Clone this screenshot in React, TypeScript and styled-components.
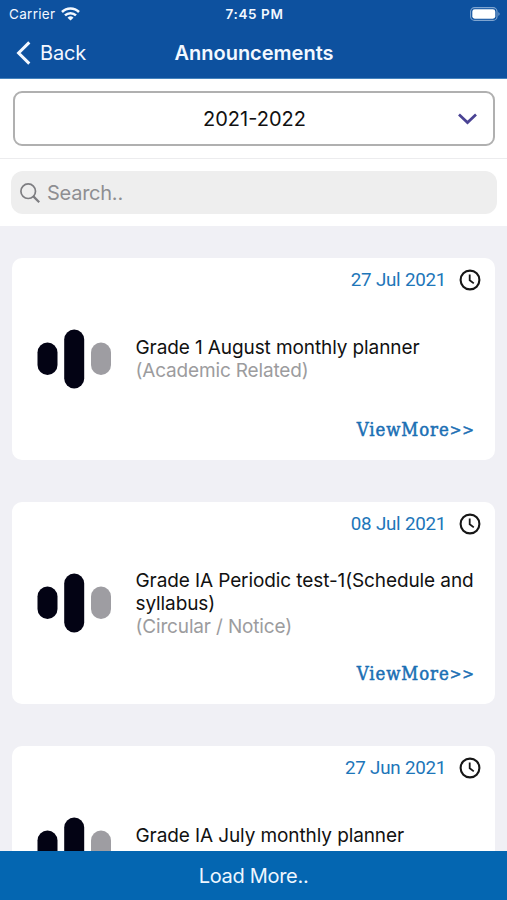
import React from "react";
import styled, { createGlobalStyle } from "styled-components";

const GlobalStyle = createGlobalStyle`
  * { box-sizing: border-box; }
  body {
    margin: 0;
    font-family: Inter, "Liberation Sans", sans-serif;
    color: #111;
    background: #f0f0f5;
  }
  button { font: inherit; border: 0; padding: 0; background: none; color: inherit; }
`;

const Screen = styled.div`
  display: flex;
  flex-direction: column;
  height: 900px;
  overflow: hidden;
`;

const Header = styled.header`
  flex: none;
  height: 79px;
  background: #0d519f;
  border-bottom: 1px solid #4583bd;
  color: #f3f8ff;
`;

const StatusBar = styled.div`
  display: grid;
  grid-template-columns: 1fr auto 1fr;
  align-items: center;
  height: 27px;
  padding: 0 7px 0 9px;
  font-size: 13.5px;
`;

const Carrier = styled.div`
  display: flex;
  align-items: center;
  gap: 6px;
  letter-spacing: 0.3px;
`;

const Clock = styled.time`
  font-weight: 600;
  font-size: 13.5px;
  letter-spacing: 0.6px;
`;

const BatteryIcon = styled.svg`
  justify-self: end;
`;

const NavBar = styled.nav`
  display: grid;
  grid-template-columns: 1fr auto 1fr;
  align-items: center;
  height: 51px;
  padding: 0 15px 0 16px;
`;

const BackButton = styled.button`
  display: flex;
  align-items: center;
  gap: 9px;
  font-size: 20px;
  letter-spacing: -0.2px;
`;

const Title = styled.h1`
  margin: 0;
  font-size: 20px;
  font-weight: 600;
`;

const YearPanel = styled.div`
  flex: none;
  height: 80px;
  padding: 12px 12px 0 13px;
  background: #fff;
  border-bottom: 1px solid #ececee;
`;

const YearSelect = styled.button`
  display: grid;
  grid-template-columns: 1fr auto 1fr;
  align-items: center;
  width: 100%;
  height: 55px;
  padding: 0 16px 0 17px;
  border: 2px solid #b0b0b0;
  border-radius: 9px;
  background: #fff;
  font-size: 20px;
  color: #111;
`;

const YearValue = styled.span`
  grid-column: 2;
`;

const ChevronDown = styled.svg`
  justify-self: end;
`;

const SearchPanel = styled.div`
  flex: none;
  height: 67px;
  padding: 12px 10px 0 11px;
  background: #fff;
`;

const SearchField = styled.div`
  display: flex;
  align-items: center;
  gap: 7px;
  height: 43px;
  padding-left: 9px;
  border-radius: 12px;
  background: #eeeeee;
  color: #8e8e92;
  font-size: 20px;
  letter-spacing: -0.25px;
`;

const List = styled.main`
  flex: 1;
  min-height: 0;
  overflow: hidden;
  display: flex;
  flex-direction: column;
  gap: 42px;
  padding: 32px 12px 0;
`;

const Card = styled.article`
  flex: none;
  display: grid;
  grid-template-rows: 44px 1fr 44px;
  height: 202px;
  border-radius: 10px;
  background: #fff;
`;

const CardDate = styled.div`
  display: flex;
  align-items: center;
  justify-content: flex-end;
  gap: 13px;
  padding-right: 14px;
  font-family: Roboto, sans-serif;
  font-size: 18.8px;
  letter-spacing: -0.3px;
  word-spacing: 0.3px;
  color: #1d76b9;
`;

const CardBody = styled.div`
  display: flex;
  align-items: center;
  gap: 24.5px;
  padding-left: 25px;
`;

const CardText = styled.div`
  flex: 1;
  padding-right: 10px;
  font-size: 19px;
  line-height: 23px;
  letter-spacing: -0.1px;
`;

const Subject = styled.div`
  color: #111;
`;

const Category = styled.div`
  min-height: 23px;
  letter-spacing: -0.16px;
  color: #9c9c9e;
`;

const ViewMore = styled.button`
  display: flex;
  align-items: center;
  justify-self: end;
  align-self: start;
  margin: 3px 20px 0 0;
  font-family: "DejaVu Serif Condensed", "DejaVu Serif", serif;
  font-size: 18.4px;
  line-height: 22px;
  letter-spacing: 0.95px;
  color: #1b6fb4;
  -webkit-text-stroke: 0.5px #1b6fb4;
`;

const Arrows = styled.span`
  font-size: 15.5px;
  line-height: 20px;
  -webkit-text-stroke-width: 0.5px;
`;

const LoadMore = styled.button`
  flex: none;
  height: 49px;
  background: #0466b1;
  color: #eef6ff;
  font-size: 20px;
  letter-spacing: -0.3px;
`;

const announcements = [
  { date: "27 Jul 2021", subject: "Grade 1 August monthly planner", category: "(Academic Related)" },
  { date: "08 Jul 2021", subject: "Grade IA Periodic test-1(Schedule and syllabus)", category: "(Circular / Notice)" },
  { date: "27 Jun 2021", subject: "Grade IA July monthly planner", category: "" },
];

const WifiIcon = () => (
  <svg width="19" height="14" viewBox="0 0 19 14" fill="none" stroke="currentColor" strokeWidth="2.5">
    <path d="M1 5 A12 12 0 0 1 18 5" />
    <path d="M4 8.4 A7.8 7.8 0 0 1 15 8.4" />
    <path d="M9.5 13.6 L6.5 10.7 A4.4 4.4 0 0 1 12.5 10.7 Z" fill="currentColor" stroke="none" />
  </svg>
);

const ClockIcon = () => (
  <svg width="22" height="22" viewBox="0 0 22 22" fill="none" stroke="#161616">
    <circle cx="11" cy="11" r="9.4" strokeWidth="2.1" />
    <path d="M10.7 5.5 V11.3 L14.8 14.4" strokeWidth="1.8" />
  </svg>
);

const BarsIcon = () => (
  <svg width="74" height="60" viewBox="0 0 74 60">
    <rect x="0.5" y="13.5" width="20" height="32.5" rx="10" fill="#030314" />
    <rect x="27.2" y="0.5" width="20" height="59" rx="10" fill="#030314" />
    <rect x="54" y="13.5" width="20" height="32.5" rx="10" fill="#9e9da2" />
  </svg>
);

export default function App() {
  return (
    <>
      <GlobalStyle />
      <Screen>
        <Header>
          <StatusBar>
            <Carrier>
              Carrier
              <WifiIcon />
            </Carrier>
            <Clock>7:45 PM</Clock>
            <BatteryIcon width="30" height="14" viewBox="0 0 30 14">
              <rect x="0.6" y="0.6" width="26.4" height="12.8" rx="4" fill="none" stroke="#7fa5d0" strokeWidth="1.1" />
              <rect x="2.3" y="2.3" width="23" height="9.4" rx="2.4" fill="#fff" />
              <path d="M28.4 5 Q30.8 7 28.4 9 Z" fill="#7fa5d0" />
            </BatteryIcon>
          </StatusBar>
          <NavBar>
            <BackButton>
              <svg width="15" height="24" viewBox="0 0 15 24" fill="none" stroke="currentColor" strokeWidth="3">
                <path d="M13.3 1.4 L2.6 12 L13.3 22.6" />
              </svg>
              Back
            </BackButton>
            <Title>Announcements</Title>
          </NavBar>
        </Header>
        <YearPanel>
          <YearSelect>
            <YearValue>2021-2022</YearValue>
            <ChevronDown width="19" height="12" viewBox="0 0 19 12" fill="none" stroke="#4a4394" strokeWidth="2.7">
              <path d="M1 1.5 L9.5 9.6 L18 1.5" />
            </ChevronDown>
          </YearSelect>
        </YearPanel>
        <SearchPanel>
          <SearchField>
            <svg width="20" height="20" viewBox="0 0 20 20" fill="none" stroke="#7d7d81" strokeWidth="1.7">
              <circle cx="8.2" cy="8.2" r="7.3" />
              <path d="M13.4 13.4 L19.2 19.2" strokeWidth="2.2" />
            </svg>
            Search..
          </SearchField>
        </SearchPanel>
        <List>
          {announcements.map((item) => (
            <Card key={item.date}>
              <CardDate>
                {item.date}
                <ClockIcon />
              </CardDate>
              <CardBody>
                <BarsIcon />
                <CardText>
                  <Subject>{item.subject}</Subject>
                  <Category>{item.category}</Category>
                </CardText>
              </CardBody>
              {item.category && (
                <ViewMore>
                  ViewMore<Arrows>&gt;&gt;</Arrows>
                </ViewMore>
              )}
            </Card>
          ))}
        </List>
        <LoadMore>Load More..</LoadMore>
      </Screen>
    </>
  );
}
